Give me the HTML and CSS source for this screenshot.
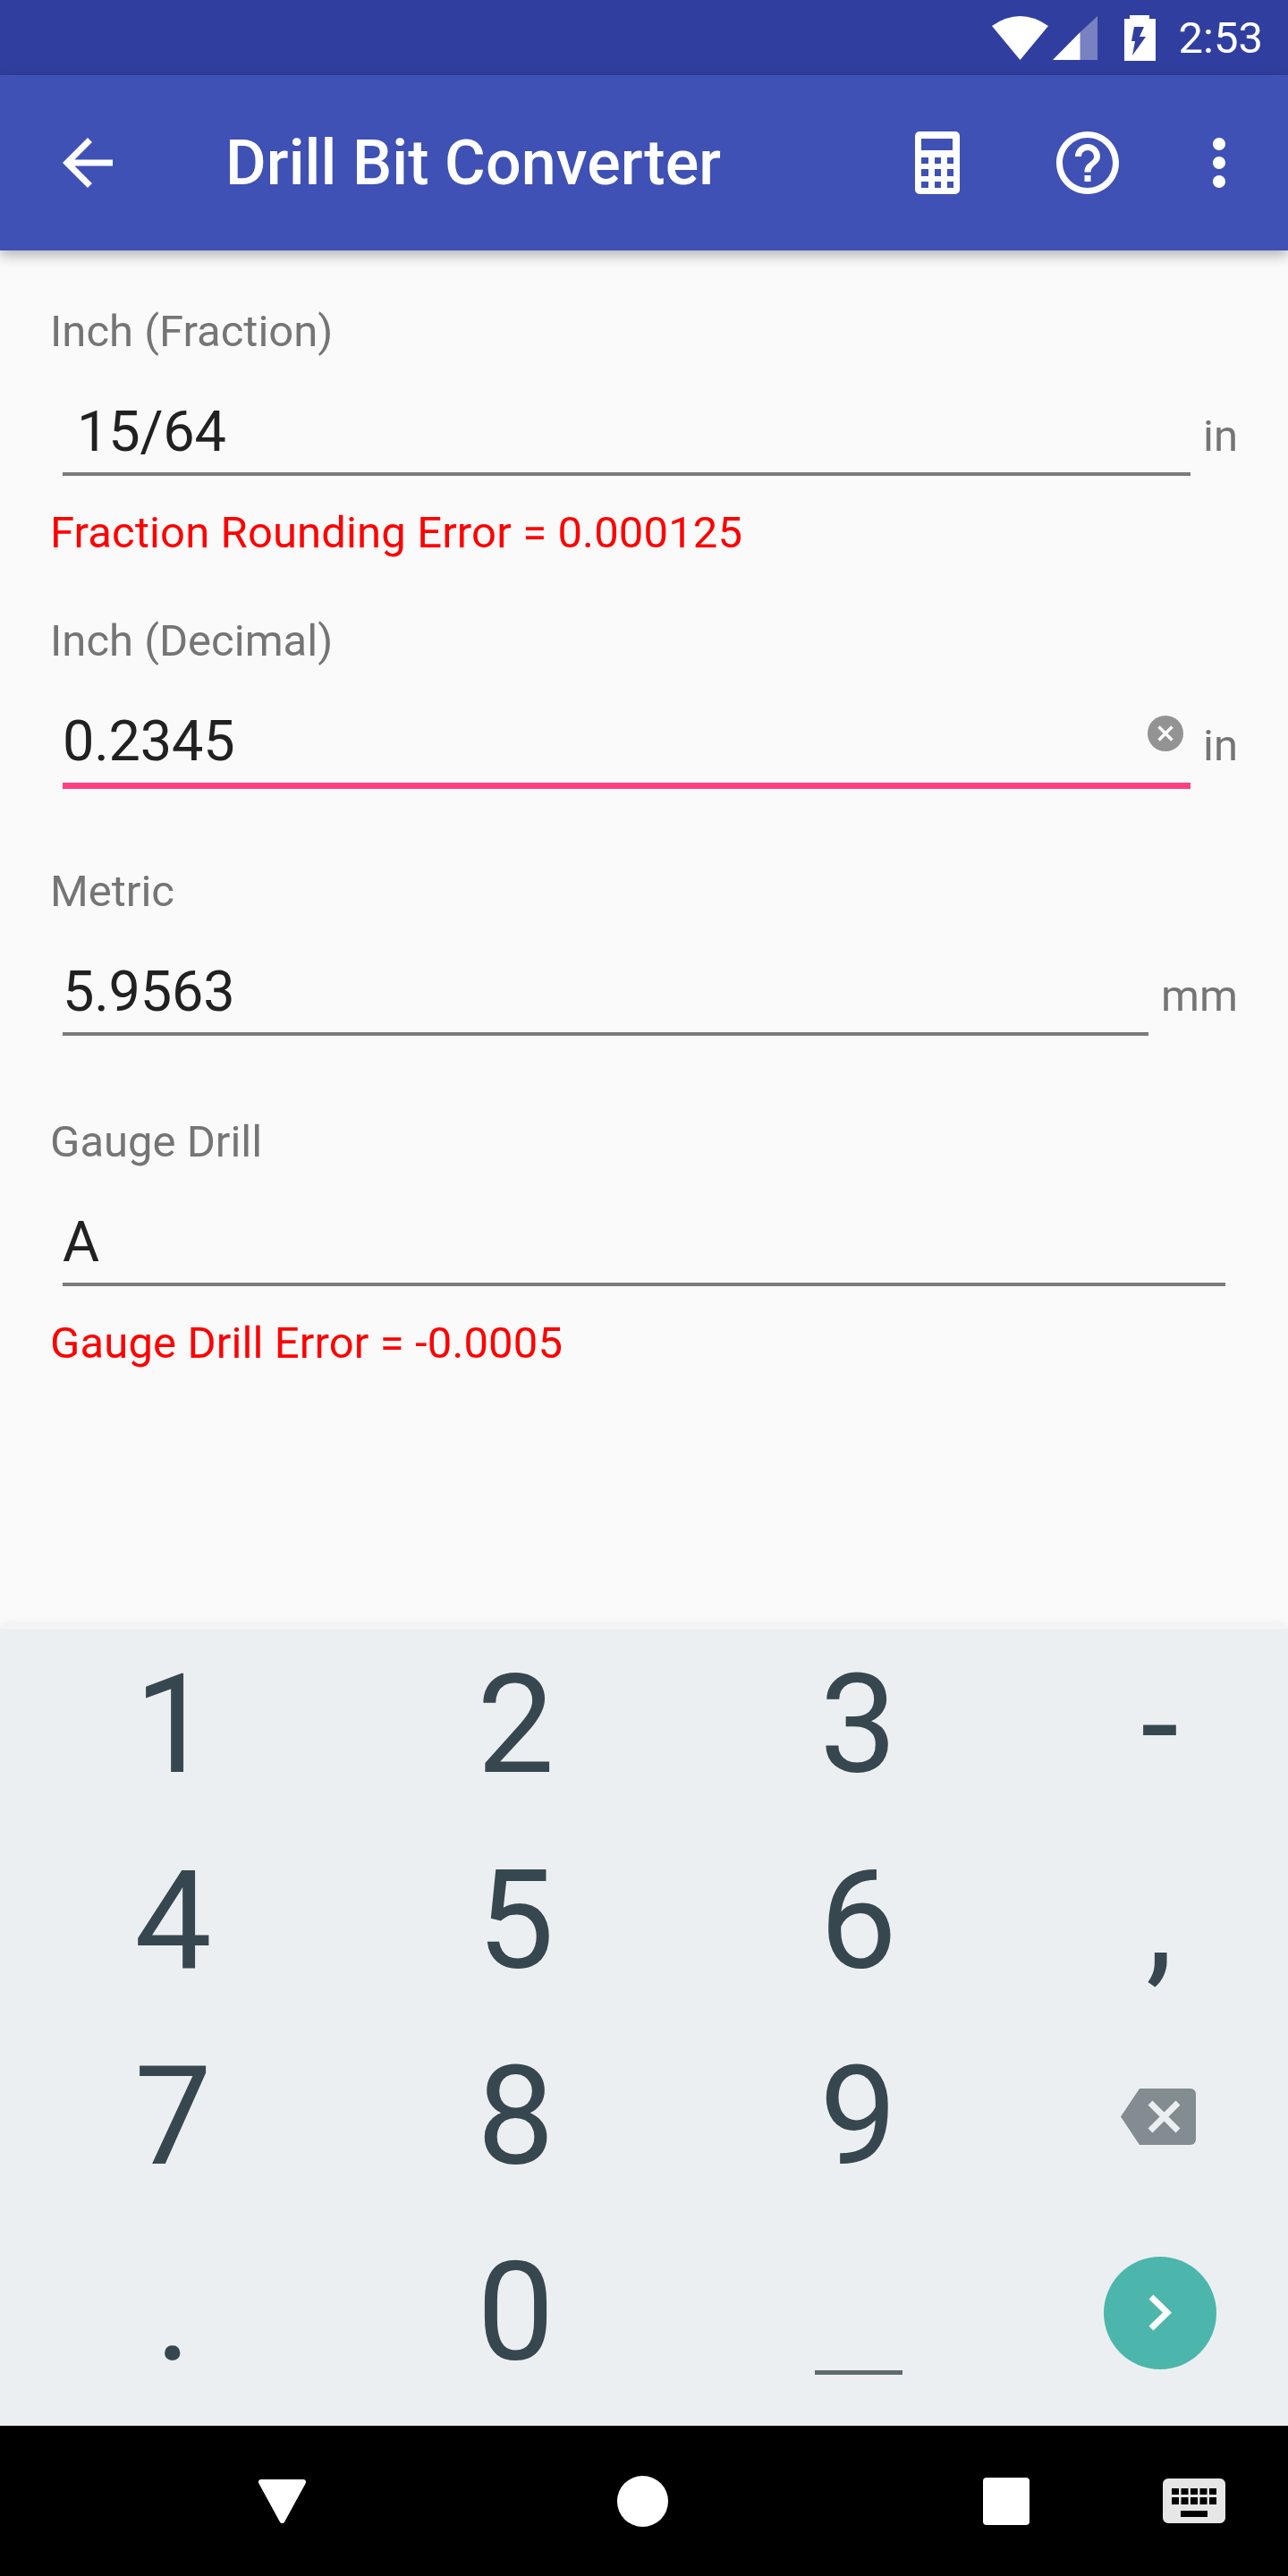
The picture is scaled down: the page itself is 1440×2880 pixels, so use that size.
FILE: index.html
```html
<!DOCTYPE html>
<html lang="en">
<head>
    <meta charset="UTF-8">
    <title>Drill Bit Converter</title>
    <link rel="stylesheet" href="styles.css">
</head>
<body>
    <div class="status-bar">
        <svg class="wifi" width="63" height="49" viewBox="0 0 63 49"><path d="M0 11Q31.5-11 63 11L31.5 49Z" fill="#fff"/></svg>
        <svg class="signal" width="50" height="49" viewBox="0 0 50 49"><path d="M30.6 18V49H50V0Z" fill="#fff" fill-opacity=".35"/><path d="M0 49L30.6 18V49Z" fill="#fff"/></svg>
        <svg class="battery" width="35" height="51" viewBox="0 0 35 51"><path fill-rule="evenodd" d="M6 0H28V4H35V51H0V4H6ZM11 13L8 29H12L9 45L24 24H17L22 13Z" fill="#fff"/></svg>
        <span class="clock">2:53</span>
    </div>

    <div class="app-bar">
        <svg class="back-icon" width="84" height="84" viewBox="0 0 24 24"><path d="M20 11H7.83l5.59-5.59L12 4l-8 8 8 8 1.41-1.41L7.83 13H20v-2z" fill="#fff"/></svg>
        <div class="app-title">Drill Bit Converter</div>
        <div class="action">
            <svg width="50" height="70" viewBox="0 0 50 70"><path fill-rule="evenodd" d="M5 0H45A5 5 0 0 1 50 5V65A5 5 0 0 1 45 70H5A5 5 0 0 1 0 65V5A5 5 0 0 1 5 0ZM7 8V21H42V8ZM7 29V36H15V29ZM22 29V36H29V29ZM36 29V36H43V29ZM7 42V50H15V42ZM22 42V50H29V42ZM36 42V50H43V42ZM7 56V63H15V56ZM22 56V63H29V56ZM36 56V63H43V56Z" fill="#fff"/></svg>
        </div>
        <div class="action">
            <svg width="84" height="84" viewBox="0 0 24 24"><path d="M11 18h2v-2h-2v2zm1-16C6.48 2 2 6.48 2 12s4.48 10 10 10 10-4.48 10-10S17.52 2 12 2zm0 18c-4.41 0-8-3.59-8-8s3.59-8 8-8 8 3.59 8 8-3.59 8-8 8zm0-14c-2.21 0-4 1.79-4 4h2c0-1.1.9-2 2-2s2 .9 2 2c0 2-3 1.75-3 5h2c0-2.25 3-2.5 3-5 0-2.21-1.79-4-4-4z" fill="#fff"/></svg>
        </div>
        <div class="action action-more">
            <svg width="84" height="84" viewBox="0 0 24 24"><path d="M12 8c1.1 0 2-.9 2-2s-.9-2-2-2-2 .9-2 2 .9 2 2 2zm0 2c-1.1 0-2 .9-2 2s.9 2 2 2 2-.9 2-2-.9-2-2-2zm0 6c-1.1 0-2 .9-2 2s.9 2 2 2 2-.9 2-2-.9-2-2-2z" fill="#fff"/></svg>
        </div>
    </div>

    <div class="content">
        <div class="field field-error">
            <div class="label">Inch (Fraction)</div>
            <div class="input-row">
                <div class="input input-inset">15/64</div>
                <div class="unit">in</div>
            </div>
            <div class="error">Fraction Rounding Error = 0.000125</div>
        </div>

        <div class="field field-focus">
            <div class="label">Inch (Decimal)</div>
            <div class="input-row">
                <div class="input">0.2345
                    <svg class="clear-icon" width="40" height="40" viewBox="0 0 40 40"><circle cx="20" cy="20" r="20" fill="#939393"/><path d="M12.5 12.5L27.5 27.5M27.5 12.5L12.5 27.5" stroke="#fafafa" stroke-width="3.5"/></svg>
                </div>
                <div class="unit">in</div>
            </div>
        </div>

        <div class="field">
            <div class="label">Metric</div>
            <div class="input-row">
                <div class="input">5.9563</div>
                <div class="unit">mm</div>
            </div>
        </div>

        <div class="field field-error">
            <div class="label">Gauge Drill</div>
            <div class="input-row input-row-wide">
                <div class="input">A</div>
            </div>
            <div class="error">Gauge Drill Error = -0.0005</div>
        </div>
    </div>

    <div class="keypad">
        <div class="key">1</div>
        <div class="key">2</div>
        <div class="key">3</div>
        <div class="key">-</div>
        <div class="key">4</div>
        <div class="key">5</div>
        <div class="key">6</div>
        <div class="key">,</div>
        <div class="key">7</div>
        <div class="key">8</div>
        <div class="key">9</div>
        <div class="key">
            <svg class="backspace" width="84" height="63" viewBox="0 0 84 63"><path d="M21 0H78A6 6 0 0 1 84 6V57A6 6 0 0 1 78 63H21L0 31.5Z" fill="#828c91"/><path d="M33 16L64 47M64 16L33 47" stroke="#eceff1" stroke-width="7"/></svg>
        </div>
        <div class="key">.</div>
        <div class="key">0</div>
        <div class="key"><span class="space-bar"></span></div>
        <div class="key">
            <div class="go-btn">
                <svg width="26" height="43" viewBox="0 0 26 43"><path d="M3 4L21 21.5L3 39" fill="none" stroke="#fff" stroke-width="7"/></svg>
            </div>
        </div>
    </div>

    <div class="nav-bar">
        <svg class="nav-back" width="57" height="49" viewBox="0 0 57 49"><path d="M5 3H52L28.5 46Z" fill="#fff" stroke="#fff" stroke-width="6" stroke-linejoin="round"/></svg>
        <svg class="nav-home" width="57" height="57" viewBox="0 0 57 57"><circle cx="28.5" cy="28.5" r="28.5" fill="#fff"/></svg>
        <svg class="nav-recent" width="52" height="53" viewBox="0 0 52 53"><rect width="52" height="53" rx="4" fill="#fff"/></svg>
        <svg class="nav-keyboard" width="70" height="50" viewBox="0 0 70 50"><path fill-rule="evenodd" d="M6 0H64A6 6 0 0 1 70 6V44A6 6 0 0 1 64 50H6A6 6 0 0 1 0 44V6A6 6 0 0 1 6 0ZM10 11V18H18V11ZM20.5 11V18H28.5V11ZM31 11V18H39V11ZM41.5 11V18H49.5V11ZM52 11V18H60V11ZM10 21V29H18V21ZM20.5 21V29H28.5V21ZM31 21V29H39V21ZM41.5 21V29H49.5V21ZM52 21V29H60V21ZM20 36V43H50V36Z" fill="#e6e6e6"/></svg>
    </div>
</body>
</html>
```

FILE: styles.css
```css
body {
    margin: 0;
    width: 1440px;
    height: 2880px;
    display: flex;
    flex-direction: column;
    overflow: hidden;
    font-family: Roboto, "Noto Sans", sans-serif;
    background: #fafafa;
}

/* Status bar */
.status-bar {
    height: 84px;
    flex: none;
    display: flex;
    align-items: center;
    justify-content: flex-end;
    padding-right: 28px;
    background: #303f9f;
}

.signal { margin-left: 5px; }
.battery { margin-left: 30px; }

.clock {
    margin-left: 26px;
    font-size: 49px;
    color: #fff;
}

/* App bar */
.app-bar {
    position: relative;
    z-index: 2;
    height: 196px;
    flex: none;
    display: flex;
    align-items: center;
    padding-right: 14px;
    background: #3f51b5;
    box-shadow: 0 5px 14px rgba(0, 0, 0, 0.3);
}

.back-icon {
    margin-left: 56px;
}

.app-title {
    flex: 1;
    margin-left: 112px;
    font-size: 70px;
    font-weight: 500;
    letter-spacing: 0.1px;
    color: #fff;
}

.action {
    width: 168px;
    display: flex;
    justify-content: center;
}

.action-more {
    width: 126px;
}

/* Form */
.content {
    flex: 1;
    padding: 62px 56px 0;
}

.field {
    margin-bottom: 90px;
}

.field-error {
    margin-bottom: 64px;
}

.field-focus {
    margin-bottom: 86px;
}

.label,
.error,
.unit {
    font-size: 49px;
    line-height: 57px;
    color: #757575;
}

.error {
    margin-top: 35px;
    letter-spacing: 0.12px;
    color: #f00;
}

.input-row {
    display: flex;
    align-items: baseline;
    padding-left: 14px;
}

.input-row-wide {
    padding-right: 14px;
}

.input {
    position: relative;
    flex: 1;
    padding-top: 47px;
    padding-bottom: 8px;
    font-size: 63px;
    line-height: 74px;
    letter-spacing: -0.2px;
    color: #212121;
    border-bottom: 4px solid #7b7b7b;
}

.input-inset {
    padding-left: 16px;
}

.field-focus .input {
    padding-bottom: 9px;
    border-bottom: 7px solid #ff4081;
}

.unit {
    margin-left: 14px;
}

.clear-icon {
    position: absolute;
    right: 8px;
    top: 55px;
}

/* Keypad */
.keypad {
    position: relative;
    flex: none;
    height: 891px;
    display: grid;
    grid-template-columns: 383px 383px 383px 291px;
    grid-auto-rows: 219px;
    padding-left: 2px;
    border-top: 3px solid #f5f5f5;
    background: #eceff1;
    box-shadow: 0 -3px 10px rgba(0, 0, 0, 0.05);
}

.key {
    display: flex;
    align-items: center;
    justify-content: center;
    padding-bottom: 4px;
    font-size: 154px;
    line-height: 180px;
    color: #37474f;
}

.backspace {
    margin-right: 3px;
}

.space-bar {
    width: 98px;
    height: 5px;
    margin-top: 134px;
    background: #5f6a70;
}

.go-btn {
    width: 126px;
    height: 126px;
    display: flex;
    align-items: center;
    justify-content: center;
    border-radius: 50%;
    background: #4db6ac;
}

/* Nav bar */
.nav-bar {
    height: 168px;
    flex: none;
    display: flex;
    align-items: center;
    padding-left: 287px;
    background: #000;
}

.nav-home { margin-left: 346px; }
.nav-recent { margin-left: 352px; }
.nav-keyboard { margin-left: 149px; }
```
